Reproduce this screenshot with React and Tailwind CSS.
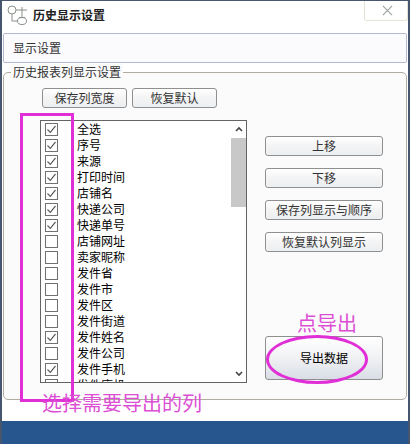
import React from "react"

const columns = [
  ["全选", true],
  ["序号", true],
  ["来源", true],
  ["打印时间", true],
  ["店铺名", true],
  ["快递公司", true],
  ["快递单号", true],
  ["店铺网址", false],
  ["卖家昵称", false],
  ["发件省", false],
  ["发件市", false],
  ["发件区", false],
  ["发件街道", false],
  ["发件姓名", true],
  ["发件公司", false],
  ["发件手机", true],
  ["发件座机", false],
]

const font = "font-['Noto_Sans_CJK_SC',sans-serif]"

const Btn = ({ className, children }) => (
  <div
    className={`flex items-center justify-center rounded-[3px] border border-[#8f8f8f] bg-gradient-to-b from-white via-[#f4f4f4] to-[#eceff2] text-[12px] leading-none text-[#333] ${className}`}
  >
    {children}
  </div>
)

const Check = ({ on }) => (
  <div className="h-[13px] w-[13px] shrink-0 border border-[#707070] bg-white">
    {on && (
      <svg viewBox="0 0 11 11" className="h-[11px] w-[11px]" fill="none" stroke="#606060" strokeWidth="1.2">
        <path d="M1.5 5.5 L4.3 8.3 L9.5 2" />
      </svg>
    )}
  </div>
)

const WindowIcon = () => (
  <svg viewBox="0 0 20 20" className="h-[20px] w-[20px]" fill="none" stroke="#8a8f8a" strokeWidth="1">
    <circle cx="5" cy="5" r="4" />
    <ellipse cx="15" cy="16" rx="4.5" ry="3.5" />
    <path d="M9 5 H20 M15 2 V12.500 M5 9 V16 H10.500 M12 12.500 H18" />
  </svg>
)

const App = () => {
  return (
    <div className={`relative flex h-[444px] w-[410px] flex-col overflow-hidden border-x-[2px] border-t border-[#47566e] bg-white ${font}`}>
      <div className="flex h-[32px] shrink-0 items-center pb-[4px] pl-[5px]">
        <WindowIcon />
        <span className="ml-[6px] text-[12px] font-bold text-[#222]">历史显示设置</span>
        <div className="ml-auto mb-[8px] flex h-[20px] w-[44px] items-center justify-center rounded-b-[3px] border-x border-b border-[#e6e3d5] pl-[2px]">
          <svg viewBox="0 0 12 12" className="h-[11px] w-[11px]" fill="none" stroke="#9aa0a0" strokeWidth="1.2">
            <path d="M1 1 L11 11 M11 1 L1 11" />
          </svg>
        </div>
      </div>
      <div className="mx-[1px] flex h-[30px] shrink-0 items-center rounded-[2px] border border-[#b4b8d0] bg-[#fbfbfe] pl-[9px] text-[12px] text-[#333]">
        显示设置
      </div>
      <div className="relative mx-[1px] mt-[9px] h-[328px] shrink-0 rounded-[5px] border border-[#b0aca0] bg-[#fbfbfb]">
        <span className="absolute left-[7px] top-[-9px] bg-[#fbfbfb] px-[2px] text-[12px] leading-[16px] text-[#333]">历史报表列显示设置</span>
        <div className="ml-[38px] mt-[15px] flex gap-[5px]">
          <Btn className="h-[20px] w-[85px]">保存列宽度</Btn>
          <Btn className="h-[20px] w-[85px]">恢复默认</Btn>
        </div>
        <div className="mt-[12px] flex">
          <div className="ml-[36px] flex h-[263px] w-[207px] overflow-hidden border border-[#646464] bg-white">
            <div className="flex-1 overflow-hidden pl-[4px]">
              {columns.map(([name, on]) => (
                <div key={name} className="flex h-[16px] items-center">
                  <Check on={on} />
                  <span className="ml-[19px] whitespace-nowrap text-[12px] leading-none text-black">{name}</span>
                </div>
              ))}
            </div>
            <div className="flex w-[15px] shrink-0 flex-col items-center">
              <svg viewBox="0 0 10 8" className="mt-[4px] h-[8px] w-[10px]" fill="none" stroke="#444" strokeWidth="1.6">
                <path d="M2 6 L5 3 L8 6" />
              </svg>
              <div className="mt-[5px] h-[69px] w-full bg-[#c8c8c8]" />
              <svg viewBox="0 0 10 8" className="mt-auto mb-[4px] h-[8px] w-[10px]" fill="none" stroke="#444" strokeWidth="1.6">
                <path d="M2 2 L5 5 L8 2" />
              </svg>
            </div>
          </div>
          <div className="ml-[18px] flex w-[118px] flex-col">
            <Btn className="mt-[16px] h-[20px] w-full">上移</Btn>
            <Btn className="mt-[12px] h-[20px] w-full">下移</Btn>
            <Btn className="mt-[12px] h-[20px] w-full">保存列显示与顺序</Btn>
            <Btn className="mt-[12px] h-[20px] w-full">恢复默认列显示</Btn>
            <div className="mt-[84px] flex h-[44px] w-full items-center justify-center rounded-[3px] border border-[#8f8f8f] bg-gradient-to-b from-white via-[#f0f1f3] to-[#d9dee6] text-[12px] leading-none text-black">
              导出数据
            </div>
          </div>
        </div>
      </div>
      <div className="mt-auto h-[23px] shrink-0 bg-[#27568f]" />

      <div className="absolute left-[18px] top-[112px] h-[289px] w-[54px] border-[3px] border-[#e02fd6]" />
      <div className="absolute left-[264px] top-[334px] h-[49px] w-[102px] rounded-[50%] border-[3px] border-[#e02fd6]" />
      <span className="absolute left-[40px] top-[389px] text-[20px] leading-[26px] text-[#dc4fd4]">选择需要导出的列</span>
      <span className="absolute left-[295px] top-[309px] text-[20px] leading-[26px] text-[#dc4fd4]">点导出</span>
    </div>
  )
}

export default App
